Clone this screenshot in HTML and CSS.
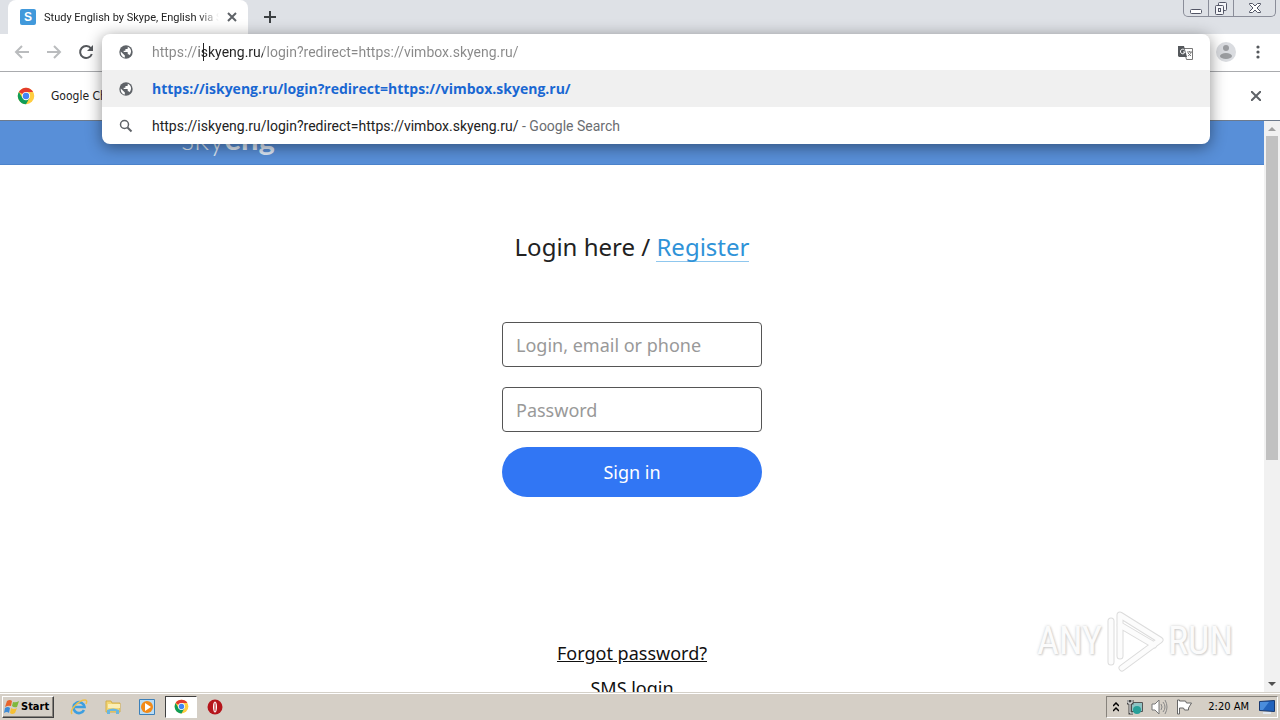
FILE: index.html
```html
<!DOCTYPE html>
<html lang="en">
<head>
<meta charset="utf-8">
<title>Study English by Skype, English via Skype</title>
<link rel="stylesheet" href="styles.css">
</head>
<body>
<svg class="defs" aria-hidden="true">
  <symbol id="globe" viewBox="0 0 24 24"><circle cx="12" cy="12" r="11.500" fill="#5f6368"/><path d="M3 11l7 7v3.500C6 21 2.500 17 3 11zM15 3v2q0 2-2 2h-2v2q0 1-1 1H8v2h6q1 0 1 1v3h1q1.500 0 2 1.500C22 13 22 6 15 3z" fill="#fff"/></symbol>
  <symbol id="chrome" viewBox="0 0 24 24"><circle cx="12" cy="12" r="11" fill="#ffcd40"/><path d="M12 12L2.500 6.500A11 11 0 0 1 21.500 6.500H12z" fill="#e33b2e"/><path d="M2.500 6.500L7.300 14.700 12 17l4.700-2.300L12 23A11 11 0 0 1 2.500 6.500z" fill="#0f9d58"/><circle cx="12" cy="12" r="5.500" fill="#fff"/><circle cx="12" cy="12" r="4.300" fill="#4285f4"/></symbol>
</svg>

<div class="tabstrip">
  <div class="tab">
    <span class="favicon">S</span>
    <span class="tab-title">Study English by Skype, English via S</span>
    <button class="icon-btn" aria-label="Close tab"><svg width="10" height="10" viewBox="0 0 10 10"><path d="M1 1l8 8M9 1l-8 8" stroke="#5f6368" stroke-width="2"/></svg></button>
  </div>
  <button class="icon-btn new-tab" aria-label="New tab"><svg width="12" height="12" viewBox="0 0 12 12"><path d="M6 0v12M0 6h12" stroke="#3c4043" stroke-width="2"/></svg></button>
  <div class="window-buttons">
    <button aria-label="Minimize"><svg width="12" height="14" viewBox="0 0 12 14"><rect x=".5" y="8.500" width="11" height="4" rx="1" fill="#fff" stroke="#535666"/></svg></button>
    <button aria-label="Restore"><svg width="14" height="14" viewBox="0 0 14 14"><g fill="#f4f5f8" stroke="#535666"><rect x="4.500" y="1.500" width="8" height="8" rx="1"/><rect x="1.500" y="4.500" width="8" height="9" rx="1"/><rect x="4.500" y="7.500" width="2" height="3"/></g></svg></button>
    <button class="wide" aria-label="Close"><svg width="12" height="12" viewBox="0 0 12 12"><path d="M.5 1.500h3L6 4l2.500-2.500h3v1L8 6l3.500 3.500v1h-3L6 8l-2.500 2.500h-3v-1L4 6 .5 2.500z" fill="#fff" stroke="#535666"/></svg></button>
  </div>
</div>

<div class="toolbar">
  <button class="icon-btn" aria-label="Back"><svg width="16" height="16" viewBox="0 0 16 16"><path d="M15 8H2M8 2L2 8l6 6" fill="none" stroke="#babcbe" stroke-width="2"/></svg></button>
  <button class="icon-btn" aria-label="Forward"><svg width="16" height="16" viewBox="0 0 16 16"><path d="M1 8h13M8 2l6 6-6 6" fill="none" stroke="#babcbe" stroke-width="2"/></svg></button>
  <button class="icon-btn" aria-label="Reload"><svg width="16" height="16" viewBox="0 0 16 16"><path d="M13 4.500A6 6 0 1 0 13.800 10" fill="none" stroke="#55585c" stroke-width="2"/><path d="M15 1v6H9z" fill="#55585c"/></svg></button>
  <button class="icon-btn profile" aria-label="Profile"><svg width="20" height="20" viewBox="0 0 20 20"><circle cx="10" cy="10" r="10" fill="#dadce0"/><circle cx="10" cy="6" r="3" fill="#9b9da0"/><ellipse cx="10" cy="14" rx="6" ry="3" fill="#9b9da0"/></svg></button>
  <button class="icon-btn" aria-label="Menu"><svg width="4" height="14" viewBox="0 0 4 14"><g fill="#55585c"><circle cx="2" cy="2" r="1.600"/><circle cx="2" cy="7" r="1.600"/><circle cx="2" cy="12" r="1.600"/></g></svg></button>
</div>

<div class="infobar">
  <svg width="18" height="18"><use href="#chrome"/></svg>
  <span class="infobar-text">Google Chrome</span>
  <button class="icon-btn" aria-label="Dismiss"><svg width="10" height="10" viewBox="0 0 10 10"><path d="M0 0l10 10M10 0L0 10" stroke="#5f6368" stroke-width="2"/></svg></button>
</div>

<div class="omnibox">
  <div class="row">
    <svg width="14" height="14"><use href="#globe"/></svg>
    <input class="url" type="text" aria-label="Address" value="https://iskyeng.ru/login?redirect=https://vimbox.skyeng.ru/">
    <span class="caret"></span>
    <button class="icon-btn" aria-label="Translate this page"><svg width="15" height="15" viewBox="0 0 15 15"><path d="M5.500 3.500h9v11h-6z" fill="#fff" stroke="#777"/><path d="M0 1h6l3 11H1l-1-1z" fill="#55585c"/><path d="M6.500 5A2.300 2.300 0 1 0 7 7H5" fill="none" stroke="#fff"/><path d="M9 7h5M11.500 6v1M13 7c0 2-2 3-3 4M10 8l3 3" fill="none" stroke="#777"/></svg></button>
  </div>
  <a class="row selected" href="#">
    <svg width="14" height="14"><use href="#globe"/></svg>
    <span class="suggestion match">https://iskyeng.ru/login?redirect=https://vimbox.skyeng.ru/</span>
  </a>
  <a class="row" href="#">
    <svg width="14" height="14" viewBox="0 0 14 14"><circle cx="5.500" cy="5.500" r="4" fill="none" stroke="#5f6368" stroke-width="1.500"/><path d="M8.500 8.500l4 4" stroke="#5f6368" stroke-width="2"/></svg>
    <span class="suggestion">https://iskyeng.ru/login?redirect=https://vimbox.skyeng.ru/ <span class="hint">- Google Search</span></span>
  </a>
</div>

<div class="viewport">
  <div class="page">
    <header class="site-header"><a class="logo" href="#">sky<b>eng</b></a></header>
    <main class="login">
      <h1>Login here / <a href="#">Register</a></h1>
      <form>
        <input type="text" placeholder="Login, email or phone" aria-label="Login, email or phone">
        <input type="password" placeholder="Password" aria-label="Password">
        <button type="button">Sign in</button>
      </form>
      <a class="link" href="#">Forgot password?</a>
      <a class="link" href="#">SMS login</a>
    </main>
    <div class="watermark">
      <span>ANY</span>
      <svg width="58" height="62" viewBox="0 0 58 62"><g fill="none" stroke-linejoin="round" stroke-linecap="round"><path d="M14 46V5l40 25-38 28M14 15l34 20M5 52V11" stroke="#dcdcdc" stroke-width="7"/><path d="M14 46V5l40 25-38 28M14 15l34 20M5 52V11" stroke="#fcfcfc" stroke-width="5"/></g></svg>
      <span>RUN</span>
    </div>
  </div>
  <div class="scrollbar">
    <svg width="8" height="4" viewBox="0 0 8 4"><path d="M0 4l4-4 4 4z" fill="#a0a0a0"/></svg>
    <div class="thumb"></div>
    <svg width="8" height="4" viewBox="0 0 8 4"><path d="M0 0l4 4 4-4z" fill="#505050"/></svg>
  </div>
</div>

<div class="taskbar">
  <button class="start"><svg width="16" height="16" viewBox="0 0 16 16"><path d="M3 2q3-2 5 0L7 7Q4 6 1 8z" fill="#e8642b"/><path d="M9 3q3 1 6-1l-2 6q-3 1-5-1z" fill="#7fb83d"/><path d="M1 9q3-2 5 0l-1 5q-2-2-5 0z" fill="#3e8bd6"/><path d="M7 9q3 2 6 0l-2 5q-3 2-5 0z" fill="#f6c034"/></svg>Start</button>
  <button class="task" aria-label="Internet Explorer"><svg width="18" height="18" viewBox="0 0 18 18"><path d="M14 12A5.500 5.500 0 1 1 14.500 9H5" fill="none" stroke="#3d9fe0" stroke-width="2.600"/><path d="M2 16C-1 12 9 2 15 2c3 0 1 4 1 4" fill="none" stroke="#efc04a" stroke-width="1.500"/></svg></button>
  <button class="task" aria-label="Explorer"><svg width="16" height="16" viewBox="0 0 16 16"><path d="M1 2h5l1 2h8v9H1z" fill="#f3d673" stroke="#d2ad4b"/><path d="M3 5h12v4H3z" fill="#fbeeb4"/><path d="M2 15v-4q6-3 12 0v4h-3v-3H5v3z" fill="#69b6df"/></svg></button>
  <button class="task" aria-label="Media Player"><svg width="16" height="16" viewBox="0 0 16 16"><path d="M.5.5h15v15H.5z" fill="#b9dcf5" stroke="#3c80b9"/><circle cx="8" cy="8" r="6" fill="#f28a18"/><path d="M6 4l6 4-6 4z" fill="#fff"/></svg></button>
  <button class="task active" aria-label="Chrome"><svg width="15" height="15"><use href="#chrome"/></svg></button>
  <button class="task" aria-label="Opera"><svg width="16" height="16" viewBox="0 0 16 16"><circle cx="8" cy="8" r="7.500" fill="#b5151b"/><ellipse cx="8" cy="8" rx="2" ry="5.500" fill="#fff"/><ellipse cx="8" cy="8" rx="1" ry="4.500" fill="#d67b7e"/></svg></button>
  <div class="tray">
    <svg width="6" height="10" viewBox="0 0 6 10"><path d="M0 4l3-3 3 3M0 9l3-3 3 3" fill="none" stroke="#000" stroke-width="1.500"/></svg>
    <svg width="16" height="16" viewBox="0 0 16 16"><path d="M4.500 3.500h11v9h-11z" fill="#8fc3c4" stroke="#555"/><circle cx="10" cy="11" r="4" fill="#27a099"/><path d="M1 1v3h4V1M3 1v13h3" fill="none" stroke="#444" stroke-width="3"/><path d="M1 1v3h4V1M3 4v10h3" fill="none" stroke="#fff"/></svg>
    <svg width="17" height="16" viewBox="0 0 17 16"><path d="M1 5h3l4-4v14l-4-4H1z" fill="#fff" stroke="#777"/><path d="M10 5q2 3 0 6M12 3q4 5 0 10M14 1q4 7 0 14" fill="none" stroke="#888"/></svg>
    <svg width="16" height="16" viewBox="0 0 16 16"><path d="M1.500 1v14h2V9h4l1 2h4V9l3-5h-5l-1-2h-6V1z" fill="#fff" stroke="#666"/></svg>
    <span class="clock">2:20 AM</span>
    <svg width="16" height="14" viewBox="0 0 16 14"><path d="M.5 1.500l15-1v11l-15-1z" fill="#2263bd" stroke="#18386f"/><path d="M1 2l9 0-6 8H1z" fill="#4a8ddd"/><path d="M4 13h8" stroke="#e2e8f0" stroke-width="2"/></svg>
  </div>
</div>
</body>
</html>
```
FILE: styles.css
```css
* { box-sizing: border-box; }
body {
  position: relative;
  display: flex;
  flex-direction: column;
  height: 100vh;
  margin: 0;
  overflow: hidden;
  background: #fff;
  color: #222;
  font-family: "Noto Sans", sans-serif;
  font-size: 14px;
}
a { color: inherit; text-decoration: none; }
button, input { font: inherit; }
svg { display: block; flex: none; }
.defs { position: absolute; width: 0; height: 0; }
.icon-btn { display: flex; flex: none; padding: 0; border: 0; background: none; }

.tabstrip { display: flex; flex: none; height: 34px; padding-left: 8px; background: #dee1e6; }
.tab {
  display: flex;
  align-items: center;
  gap: 8px;
  width: 240px;
  padding: 0 11px 0 12px;
  border-radius: 8px 8px 0 0;
  background: #fff;
}
.favicon {
  flex: none;
  width: 16px;
  border-radius: 2px;
  background: #4199db;
  color: #fff;
  font: bold 12px/16px "Liberation Sans", sans-serif;
  text-align: center;
}
.tab-title {
  flex: 1;
  overflow: hidden;
  font-family: Roboto, sans-serif;
  font-size: 11px;
  white-space: nowrap;
  mask-image: linear-gradient(to right, #000 88%, transparent);
}
.new-tab { align-self: center; margin-left: 16px; }
.window-buttons {
  display: flex;
  height: 17px;
  margin: 0 4px 0 auto;
  border: 1px solid #8a8d99;
  border-top: 0;
  border-radius: 0 0 5px 5px;
}
.window-buttons button {
  display: flex;
  align-items: center;
  justify-content: center;
  width: 25px;
  padding: 0;
  border: 0;
  border-right: 1px solid #8a8d99;
  background: none;
}
.window-buttons .wide { width: 41px; border-right: 0; }

.toolbar {
  display: flex;
  flex: none;
  align-items: center;
  gap: 16px;
  height: 38px;
  padding: 0 20px 2px 14px;
  border-bottom: 1px solid #a9abae;
}
.profile { margin-left: auto; }
.toolbar .profile + .icon-btn { margin-left: 4px; }
.infobar {
  display: flex;
  flex: none;
  align-items: center;
  gap: 16px;
  height: 49px;
  padding: 0 19px 0 17px;
  border-bottom: 1px solid #6d7a8c;
}
.infobar-text { flex: 1; font-family: "DejaVu Sans Condensed", sans-serif; font-size: 12px; }

.omnibox {
  position: absolute;
  z-index: 2;
  top: 34px;
  left: 102px;
  right: 70px;
  overflow: hidden;
  border-radius: 8px;
  background: #fff;
  box-shadow: 0 3px 16px rgba(0, 0, 0, .45);
}
.row {
  position: relative;
  display: flex;
  align-items: center;
  gap: 19px;
  height: 37px;
  padding: 0 17px;
  color: #222;
  font-family: Roboto, sans-serif;
}
.row:first-child { height: 36px; }
.selected { background: #f0f0f0; }
.url {
  flex: 1;
  padding: 0;
  border: 0;
  outline: 0;
  background: linear-gradient(to right, #888 47px, #222 47px 111px, #888 111px);
  background-clip: text;
  color: transparent;
}
.caret { position: absolute; top: 9px; left: 101px; width: 1px; height: 18px; background: #222; }
.suggestion { white-space: nowrap; }
.match { color: #1967d2; font-family: "Open Sans", sans-serif; font-weight: 700; }
.hint { color: #6a6d71; }

.viewport { display: flex; flex: 1; min-height: 0; }
.page { position: relative; flex: 1; overflow: hidden; }
.site-header {
  display: flex;
  align-items: flex-start;
  height: 44px;
  padding: 0 181px;
  border-bottom: 1px solid #4c83cb;
  background: #588fd8;
}
.logo { color: #dfe9f7; font: 300 31px/34px Lato, sans-serif; }
.logo b { font-weight: 700; }
.login {
  display: flex;
  flex-direction: column;
  align-items: center;
  padding-top: 64px;
}
h1 { margin: 0 0 57px; font-size: 24px; font-weight: 400; line-height: 36px; }
h1 a { display: inline-block; border-bottom: 1px solid #8fc7ee; color: #2f93d8; line-height: 28px; }
form { display: flex; flex-direction: column; width: 260px; margin-bottom: 144px; }
form input {
  width: 100%;
  height: 45px;
  margin-bottom: 20px;
  padding: 0 13px;
  border: 1px solid #555;
  border-radius: 4px;
  background: #fff;
  font-size: 18px;
}
form input::placeholder { color: #999; opacity: 1; }
form input[type="password"] { margin-bottom: 15px; }
form button {
  height: 50px;
  border: 0;
  border-radius: 25px;
  background: #3176f4;
  color: #fff;
  font-size: 18px;
}
.link { margin-bottom: 11px; color: #111; font-size: 18px; line-height: 24px; text-decoration: underline; }

.watermark {
  position: absolute;
  right: 31px;
  bottom: 20px;
  display: flex;
  align-items: center;
  gap: 4px;
  color: #fbfbfb;
  font: 38px/60px "Roboto Condensed", "Liberation Sans Narrow", sans-serif;
  text-shadow: 0 0 3px #ccc, 1px 1px 2px #d4d4d4;
}

.scrollbar {
  display: flex;
  flex-direction: column;
  align-items: center;
  width: 16px;
  padding: 6px 0;
  background: #f1f1f1;
}
.thumb { width: 12px; height: 58%; margin: 5px 0 auto; background: #c1c1c1; }

.taskbar {
  display: flex;
  flex: none;
  align-items: center;
  gap: 2px;
  height: 28px;
  padding: 0 2px;
  border-top: 1px solid #d4d0c8;
  background: #d5cfc6;
  box-shadow: inset 0 1px #fff;
  color: #000;
  font: 11px "DejaVu Sans Condensed", sans-serif;
}
.start {
  display: flex;
  align-items: center;
  gap: 1px;
  width: 52px;
  height: 22px;
  margin-right: 7px;
  padding: 0 1px;
  border: 1px solid;
  border-color: #fff #404040 #404040 #fff;
  box-shadow: inset -1px -1px #87837c;
  background: #d5cfc6;
  font: bold 11px "DejaVu Sans Condensed", sans-serif;
}
.task {
  display: flex;
  align-items: center;
  justify-content: center;
  width: 32px;
  height: 22px;
  padding: 0;
  border: 1px solid transparent;
  background: none;
}
.active { border-color: #404040 #fff #fff #404040; background: #fff; }
.tray {
  display: flex;
  align-items: center;
  gap: 8px;
  height: 22px;
  margin-left: auto;
  padding: 0 2px 0 6px;
  border: 1px solid;
  border-color: #87837c #fff #fff #87837c;
}
.clock { margin: 0 2px 0 8px; }
```
